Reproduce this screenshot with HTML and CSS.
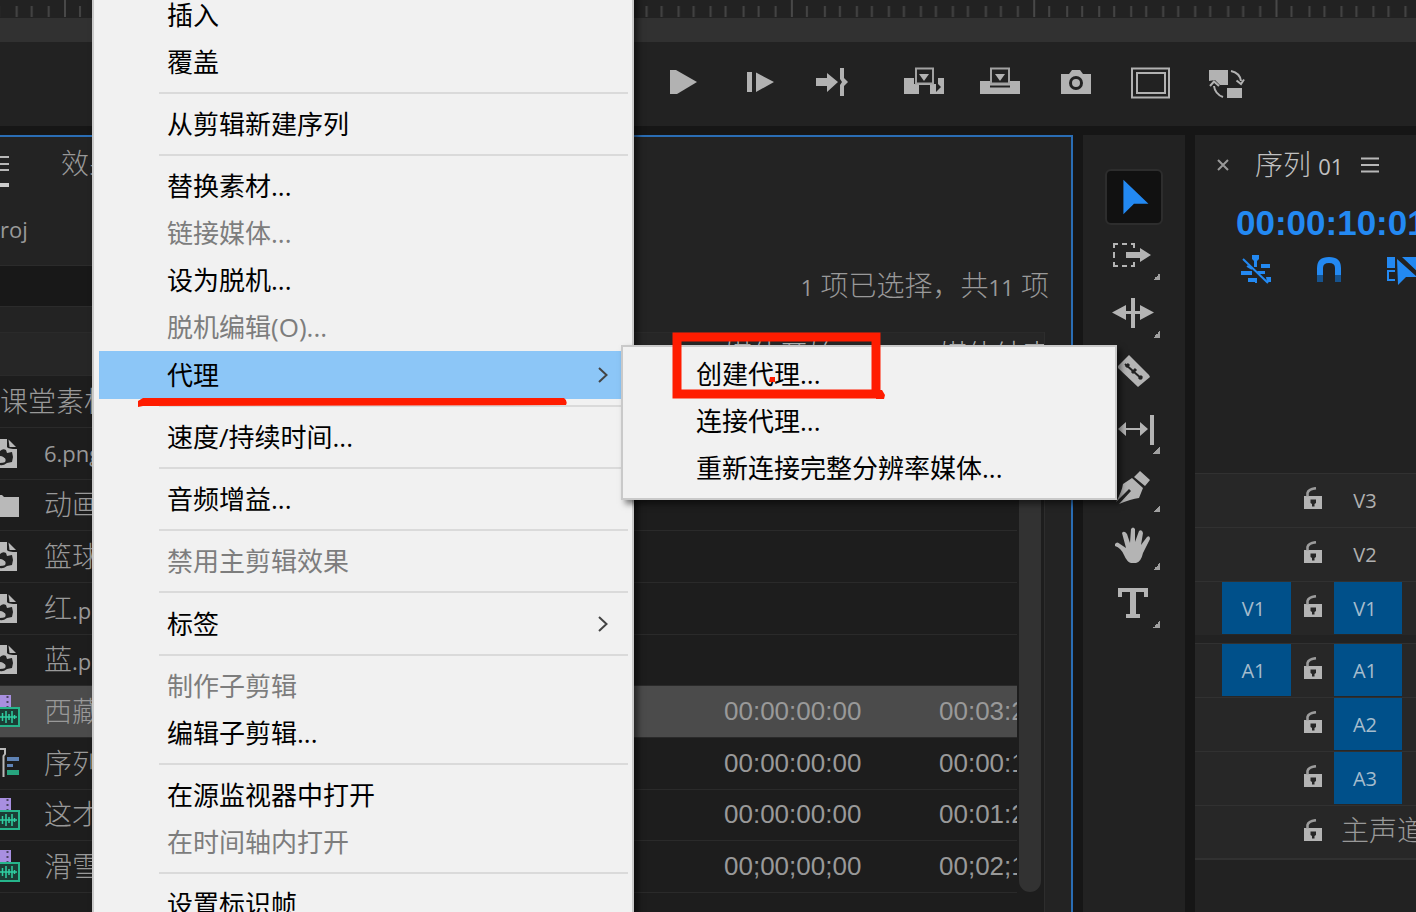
FILE: index.html
```html
<!DOCTYPE html>
<html lang="zh-CN">
<head>
<meta charset="utf-8">
<title>序列 01</title>
<link rel="stylesheet" href="styles.css">
</head>
<body>
<svg class="defs" aria-hidden="true">
  <symbol id="lock" viewBox="0 0 18 22">
    <path d="M0 9H18V22H0Z" fill="#b4b4b4"/>
    <path d="M3.5 9.500V6Q4.500 2 12 1.200" fill="none" stroke="#9c9c9c" stroke-width="2.600"/>
    <path d="M6.500 12.500H12V16L10.500 17V19.500H8V17L6.500 16Z" fill="#262626"/>
  </symbol>
  <symbol id="still" viewBox="0 0 20 30">
    <path d="M0 1H7V9Q8 11 17 11V30H0Z" fill="#b9b9b9"/>
    <path d="M8.500 1.500L16 9H9.500Z" fill="#b9b9b9"/>
    <path d="M0 13Q3 10 6 12L7 15L12 14L13 19L12 24L7 25Q3 28 0 27V25Q4 25 5 22Q4 18 0 18Z" fill="#222"/>
    <circle cx="3" cy="22" r="2.600" fill="#b9b9b9"/>
  </symbol>
  <symbol id="clip" viewBox="0 0 20 34">
    <path d="M0 1H11V14H0Z" fill="#a88fe0"/>
    <path d="M7.500 2V13" stroke="#4a4360" stroke-width="2" stroke-dasharray="2 3"/>
    <path d="M-2 14H19V32H-2Z" fill="#1c3d35" stroke="#26b58b" stroke-width="2"/>
    <path d="M0 23H17M2.500 19V27M6 17V29M9 20V26M12 17V29M14.500 21V25" stroke="#2fd0a2" stroke-width="1.500"/>
  </symbol>
  <symbol id="sequence" viewBox="0 0 20 34">
    <path d="M0 3H5V8L3.500 10V31" fill="none" stroke="#b9b9b9" stroke-width="2"/>
    <path d="M7 11H19V15H7ZM7 18H13V21H7Z" fill="#5f83b5"/>
    <path d="M7 24H19V29H7Z" fill="#27a47e"/>
  </symbol>
  <symbol id="arrow" viewBox="0 0 12 16"><path d="M2 1L9.500 8L2 15" fill="none" stroke="#444" stroke-width="2"/></symbol>
  <symbol id="bars" viewBox="0 0 18 16"><path d="M0 1.500H18M0 8H18M0 14.500H18" stroke="#b8b8b8" stroke-width="2"/></symbol>
</svg>

<header class="monitor">
  <svg class="ruler" aria-hidden="true">
    <defs>
      <pattern id="ticks" x="64" y="0" width="242.300" height="18" patternUnits="userSpaceOnUse">
        <path d="M1 0V17" stroke="#484848" stroke-width="2"/>
        <path d="M16 6V17M34 6V17M49 6V17M66 6V17M81 6V17M98 6V17M113 6V17M130 6V17M145 6V17M162 6V17M177 6V17M195 6V17M210 6V17M227 6V17" stroke="#444" stroke-width="2"/>
      </pattern>
    </defs>
    <rect width="100%" height="18" fill="url(#ticks)"/>
  </svg>
  <div class="zoombar"></div>
  <div class="transport">
    <div class="group">
      <button aria-label="播放"><svg viewBox="0 0 44 36"><path d="M9 6H15L36 18L16 30H9Z" fill="#b2b2b2"/></svg></button>
      <button aria-label="前进一帧"><svg viewBox="0 0 44 36"><path d="M10 8H15V28H10ZM19 8.500L37 18L19 28Z" fill="#b2b2b2"/></svg></button>
      <button aria-label="转到出点"><svg viewBox="0 0 44 36"><path d="M3 14H14V9L25 18L14 28V22H3ZM27 4H31V14L35 18L31 22V32H27V21L29 18L27 15Z" fill="#b2b2b2"/></svg></button>
    </div>
    <div class="group">
      <button aria-label="插入"><svg viewBox="0 0 44 36"><path d="M2 14H12V20H36V14H42V30H28V21H17V30H2Z" fill="#b2b2b2"/><path d="M14 4.500H31V19.500H14Z" fill="#222" stroke="#a2a2a2" stroke-width="2"/><path d="M17 10H27L22 17Z" fill="#b2b2b2"/><path d="M34 18L39 23L34 28Z" fill="#222"/></svg></button>
      <button aria-label="覆盖"><svg viewBox="0 0 44 36"><path d="M2 17H42V30H2Z" fill="#b2b2b2"/><path d="M13 4.500H31V19.500H13Z" fill="#222" stroke="#a2a2a2" stroke-width="2"/><path d="M17 10H27L22 17Z" fill="#b2b2b2"/><path d="M12 22.500H32" stroke="#222" stroke-width="2"/></svg></button>
      <button aria-label="导出帧"><svg viewBox="0 0 44 36"><path d="M7 10H15L18 6H26L29 10H37V30H7Z" fill="#b2b2b2"/><circle cx="22" cy="19" r="5.500" fill="none" stroke="#222" stroke-width="3"/></svg></button>
      <button aria-label="安全边距"><svg viewBox="0 0 44 36"><path d="M2 4.500H39V33.500H2ZM7 9H35V29H7Z" fill="none" stroke="#b2b2b2" stroke-width="2"/></svg></button>
      <button aria-label="切换代理"><svg viewBox="0 0 44 36"><path d="M3 6H22V21H14L9 16L3 17ZM21 24H36V34H21Z" fill="#b2b2b2"/><path d="M25 7Q34 9 35 17M30.500 16.500L35 20L38 15.500M17 33Q9 30 8 22M4 22L8 17.500L13 22" fill="none" stroke="#b2b2b2" stroke-width="2"/></svg></button>
    </div>
  </div>
</header>

<main class="workspace">
  <section class="project">
    <div class="tabs">
      <button class="tab-menu" aria-label="项目菜单"><svg viewBox="0 0 9 32"><path d="M0 2H9M0 9H9M0 15H9" stroke="#b8b8b8" stroke-width="2"/><path d="M0 30H9" stroke="#ccc" stroke-width="4"/></svg></button>
      <button class="tab">效果</button>
    </div>
    <p class="filename">roj</p>
    <div class="filter">
      <input class="search" type="text" aria-label="搜索">
      <span class="count"><small>1</small> 项已选择，共<small>11</small> 项</span>
    </div>
    <div class="bin">
      <table>
        <colgroup><col class="col-icon"><col class="col-name"><col class="col-start"><col></colgroup>
        <thead><tr><th colspan="2"></th><th>媒体开始</th><th>媒体结束</th></tr></thead>
        <tbody>
          <tr><td colspan="2">课堂素材</td><td></td><td></td></tr>
          <tr><td><svg class="kind"><use href="#still"/></svg></td><td>6.png</td><td></td><td></td></tr>
          <tr><td><svg class="kind" viewBox="0 0 20 34"><path d="M0 8H2L4 10H19V30H0Z" fill="#b9b9b9"/></svg></td><td>动画</td><td></td><td></td></tr>
          <tr><td><svg class="kind"><use href="#still"/></svg></td><td>篮球</td><td></td><td></td></tr>
          <tr><td><svg class="kind"><use href="#still"/></svg></td><td>红<small>.png</small></td><td></td><td></td></tr>
          <tr><td><svg class="kind"><use href="#still"/></svg></td><td>蓝<small>.png</small></td><td></td><td></td></tr>
          <tr class="selected"><td><svg class="kind"><use href="#clip"/></svg></td><td>西藏</td><td class="time">00:00:00:00</td><td class="time">00:03:2</td></tr>
          <tr><td><svg class="kind"><use href="#sequence"/></svg></td><td>序列</td><td class="time">00:00:00:00</td><td class="time">00:00:1</td></tr>
          <tr><td><svg class="kind"><use href="#clip"/></svg></td><td>这才</td><td class="time">00:00:00:00</td><td class="time">00:01:2</td></tr>
          <tr><td><svg class="kind"><use href="#clip"/></svg></td><td>滑雪</td><td class="time">00;00;00;00</td><td class="time">00;02;1</td></tr>
        </tbody>
      </table>
      <div class="scroll"><div class="thumb"></div></div>
    </div>
  </section>

  <nav class="tools" aria-label="工具">
    <button class="tool active" aria-label="选择工具"><svg viewBox="0 0 56 56"><path d="M17 10L43 35H28L17 46Z" fill="#2389f2"/></svg></button>
    <button class="tool more" aria-label="向前选择轨道工具"><svg viewBox="0 0 56 56"><path d="M9 21V17H13M17 17H22M26 17H29V21M9 25V31M9 35V39H13M17 39H22M26 39H29V35" fill="none" stroke="#b4b4b4" stroke-width="2"/><path d="M21 25H35V21L46 28L35 35V31H21Z" fill="#b4b4b4"/></svg></button>
    <button class="tool more" aria-label="波纹编辑工具"><svg viewBox="0 0 56 56"><path d="M26 13H30V43H26ZM7 27.500L21 20V26H35V20L49 27.500L35 35V29H21V35Z" fill="#b4b4b4"/></svg></button>
    <button class="tool" aria-label="剃刀工具"><svg viewBox="0 0 56 56"><path d="M24 12L44 32L45 34L33 44L13 25V23Z" fill="#b4b4b4"/><path d="M20 21L37 36" stroke="#222" stroke-width="2"/><path d="M21 24L24 21M27 30L31 26M34 36L37 33" stroke="#222" stroke-width="3"/></svg></button>
    <button class="tool more" aria-label="外滑工具"><svg viewBox="0 0 56 56"><path d="M45 14H49V44H45ZM13 28L21 21V27H35V21L43 28L35 35V29H21V35Z" fill="#b4b4b4"/></svg></button>
    <button class="tool more" aria-label="钢笔工具"><svg viewBox="0 0 56 56"><path d="M35 12L45 21L40 27L29 18ZM27 19L38 29L34 39Q26 40 14 45L26 32L24 30L11 43Q17 32 18 25Z" fill="#b4b4b4"/></svg></button>
    <button class="tool more" aria-label="手形工具"><svg viewBox="0 0 56 56"><path d="M10 27Q12 24 15 27L21 31L17 16Q19 13 22 17L25 26L26 12Q28 9 30 12V25L34 14Q37 12 38 16L36 28L42 20Q45 18 45 22L38 36Q36 45 31 46H26Q22 45 19 38Q16 31 10 29Z" fill="#b4b4b4"/></svg></button>
    <button class="tool more" aria-label="文字工具"><svg viewBox="0 0 56 56"><path d="M13 13H43V22H39V17H31V39H35V43H21V39H25V17H17V22H13Z" fill="#b4b4b4"/></svg></button>
  </nav>

  <section class="timeline">
    <div class="seq-tab">
      <button class="close" aria-label="关闭"><svg viewBox="0 0 12 12"><path d="M1 1L11 11M11 1L1 11" stroke="#999" stroke-width="2"/></svg></button>
      <span class="seq-name">序列 <small>01</small></span>
      <button class="seq-menu" aria-label="序列菜单"><svg><use href="#bars"/></svg></button>
    </div>
    <div class="timecode">00:00:10:01</div>
    <div class="options">
      <button aria-label="嵌套序列"><svg viewBox="0 0 32 32"><path d="M12 2H19V6L17 8V14H14V8L12 6ZM21 11H30V15H21ZM17 18H25V21H19ZM1 18H12V22H1ZM8 25H15V29H8ZM17 25V30H15V25ZM26 24H31V29H27Z" fill="#2389f2"/><path d="M3 6L28 30M7 13L12 16" stroke="#2389f2" stroke-width="2"/></svg></button>
      <button aria-label="对齐"><svg viewBox="0 0 32 32"><path d="M7 22V15Q7 7 16 7Q25 7 25 15V22" fill="none" stroke="#2389f2" stroke-width="6"/><path d="M7 22V29M25 22V29" stroke="#16538f" stroke-width="6"/></svg></button>
      <button aria-label="链接选择项"><svg viewBox="0 0 32 32"><path d="M1 4H9V15H1ZM16 4H32V19Z" fill="#2389f2"/><path d="M9 18H2V27H9" fill="none" stroke="#2389f2" stroke-width="2"/><path d="M11 6L31 24L20 24L12 32Z" fill="#2389f2"/></svg></button>
    </div>
    <div class="tracks">
      <div class="track"><svg class="lock"><use href="#lock"/></svg><button class="target">V3</button></div>
      <div class="track"><svg class="lock"><use href="#lock"/></svg><button class="target">V2</button></div>
      <div class="track"><button class="source">V1</button><svg class="lock"><use href="#lock"/></svg><button class="target on">V1</button></div>
      <div class="track audio"><button class="source">A1</button><svg class="lock"><use href="#lock"/></svg><button class="target on">A1</button></div>
      <div class="track"><svg class="lock"><use href="#lock"/></svg><button class="target on">A2</button></div>
      <div class="track"><svg class="lock"><use href="#lock"/></svg><button class="target on">A3</button></div>
      <div class="track last"><svg class="lock"><use href="#lock"/></svg><span class="master">主声道</span></div>
    </div>
  </section>
</main>

<ul class="menu main-menu">
  <li><button>插入</button></li>
  <li><button>覆盖</button></li>
  <li class="sep"></li>
  <li><button>从剪辑新建序列</button></li>
  <li class="sep"></li>
  <li><button>替换素材...</button></li>
  <li><button disabled>链接媒体...</button></li>
  <li><button>设为脱机...</button></li>
  <li><button disabled>脱机编辑(O)...</button></li>
  <li><button class="parent open">代理<svg><use href="#arrow"/></svg></button></li>
  <li class="sep"></li>
  <li><button>速度/持续时间...</button></li>
  <li class="sep"></li>
  <li><button>音频增益...</button></li>
  <li class="sep"></li>
  <li><button disabled>禁用主剪辑效果</button></li>
  <li class="sep"></li>
  <li><button class="parent">标签<svg><use href="#arrow"/></svg></button></li>
  <li class="sep"></li>
  <li><button disabled>制作子剪辑</button></li>
  <li><button>编辑子剪辑...</button></li>
  <li class="sep"></li>
  <li><button>在源监视器中打开</button></li>
  <li><button disabled>在时间轴内打开</button></li>
  <li class="sep"></li>
  <li><button>设置标识帧</button></li>
</ul>

<ul class="menu sub-menu">
  <li><button>创建代理...</button></li>
  <li><button>连接代理...</button></li>
  <li><button>重新连接完整分辨率媒体...</button></li>
</ul>

<svg class="marks" viewBox="0 0 750 80" aria-hidden="true">
  <path d="M5 66H426Q430 69 428 73L5 74L0 75V69Z" fill="#ff1c00"/>
  <path d="M539 5H738V62H539Z" fill="none" stroke="#ff1c00" stroke-width="9"/>
  <path d="M738 58H744L747 63L746 67H738Z" fill="#ff1c00"/>
  <path d="M632 45H637V50H631Z" fill="#ff1c00"/>
</svg>
</body>
</html>
```
FILE: styles.css
```css
* { box-sizing: border-box; }

body {
  margin: 0;
  height: 100vh;
  overflow: hidden;
  position: relative;
  display: flex;
  flex-direction: column;
  background: #161616;
  color: #999;
  font-family: "Open Sans", "Noto Sans CJK SC", sans-serif;
  font-size: 22px;
}

button {
  margin: 0;
  padding: 0;
  border: 0;
  background: none;
  color: inherit;
  font: inherit;
}

small { font-size: 22px; font-weight: 400; line-height: 1; }
svg { display: block; }
.defs { position: absolute; width: 0; height: 0; }

/* Monitor strip */
.monitor { background: #222; }
.ruler { width: 100%; height: 18px; }
.zoombar { height: 24px; background: #313131; }
.transport {
  display: flex;
  gap: 13px;
  height: 84px;
  padding: 0 0 4px 645px;
}
.group { display: flex; }
.group button {
  width: 76px;
  display: flex;
  align-items: center;
  justify-content: center;
}
.group svg { width: 44px; height: 36px; }

.workspace {
  flex: 1;
  min-height: 0;
  display: flex;
  gap: 10px;
  margin-top: 9px;
}

/* Project panel */
.project {
  flex: 1;
  min-width: 0;
  display: flex;
  flex-direction: column;
  background: #232323;
  border: solid #2a6db4;
  border-width: 2px 2px 0 0;
}
.tabs {
  display: flex;
  gap: 52px;
  height: 58px;
  font-size: 28px;
  font-weight: 300;
}
.tab { height: 52px; line-height: 52px; }
.tab-menu { padding-top: 10px; }
.tab-menu svg { width: 9px; height: 32px; }
.filename { margin: 0; height: 70px; line-height: 68px; }
.filter {
  display: flex;
  justify-content: space-between;
  align-items: flex-start;
  height: 42px;
  padding-right: 22px;
}
.search {
  width: 480px;
  height: 42px;
  background: #181818;
  border: 1px solid #2b2b2b;
  border-left: 0;
}
.count, .seq-name, .master {
  font-size: 28px;
  font-weight: 300;
  line-height: 40px;
  white-space: pre;
}

.bin {
  flex: 1;
  min-height: 0;
  position: relative;
  overflow: hidden;
  margin: 25px 26px 0 0;
  background: #1d1d1d;
  border-right: 1px solid #2d2d2d;
}
table {
  width: 100%;
  table-layout: fixed;
  border-collapse: collapse;
}
.col-icon { width: 44px; }
.col-name { width: 680px; }
.col-start { width: 215px; }
th, td {
  padding: 0;
  border-top: 1px solid #2a2a2a;
  text-align: left;
  white-space: nowrap;
  overflow: hidden;
}
th {
  height: 43px;
  background: #262626;
  color: #b0b0b0;
  font-size: 28px;
  font-weight: 300;
  line-height: 42px;
}
td {
  height: 52px;
  padding-bottom: 2px;
  font-size: 28px;
  font-weight: 300;
  line-height: 46px;
}
tr:nth-child(3n) td { height: 51px; }
tr:nth-child(2) td { font-size: 22px; font-weight: 400; }
tbody tr:last-child td { border-bottom: 1px solid #2a2a2a; }
.selected { background: #4b4b4b; }
td.time {
  font-family: "Liberation Sans", sans-serif;
  font-size: 26px;
  font-weight: 400;
}
.kind { width: 20px; height: 34px; }
.scroll {
  position: absolute;
  top: 43px;
  right: 0;
  bottom: 0;
  width: 27px;
  background: #1d1d1d;
}
.thumb {
  width: 22px;
  height: 517px;
  margin-left: 2px;
  border-radius: 11px;
  background: #323232;
}

/* Tool palette */
.tools {
  width: 102px;
  padding-top: 34px;
  display: flex;
  flex-direction: column;
  align-items: center;
  background: #222;
}
.tool {
  position: relative;
  width: 58px;
  height: 58px;
}
.tool svg { width: 56px; height: 56px; }
.tool.active {
  height: 56px;
  margin-bottom: 1px;
  overflow: hidden;
  display: flex;
  align-items: center;
  justify-content: center;
  background: #111;
  border: 2px solid #2d2d2d;
  border-radius: 6px;
}
.tool.more::after {
  content: "";
  position: absolute;
  right: 3px;
  bottom: 4px;
  width: 7px;
  height: 7px;
  background: linear-gradient(135deg, transparent 50%, #a0a0a0 50%);
}

/* Timeline */
.timeline {
  width: 221px;
  overflow: hidden;
  background: #222;
}
.seq-tab {
  display: flex;
  align-items: center;
  height: 60px;
  padding-left: 22px;
  color: #c0c0c0;
}
.close svg { width: 12px; height: 12px; }
.seq-name { margin: 0 18px 0 26px; padding-bottom: 2px; }
.seq-menu svg { width: 18px; height: 16px; }
.timecode {
  height: 56px;
  padding-left: 41px;
  color: #2389f2;
  font: bold 35px/56px "Liberation Sans", sans-serif;
}
.options {
  display: flex;
  gap: 41px;
  height: 36px;
  padding-left: 45px;
}
.options svg { width: 32px; height: 32px; }
.tracks { margin-top: 186px; }
.track {
  display: grid;
  grid-template-columns: 27px 69px 43px 68px 1fr;
  align-items: start;
  height: 54px;
  background: #272727;
  border-top: 1px solid #313131;
  font-size: 20px;
}
.track.audio { margin-top: 8px; }
.track.last { height: 55px; border-bottom: 2px solid #313131; }
.track > * { grid-row: 1; }
.source { grid-column: 2; }
.lock {
  grid-column: 3;
  width: 18px;
  height: 22px;
  margin-top: 13px;
  justify-self: center;
}
.target { grid-column: 4; height: 52px; padding: 0 6px 0 0; color: #b0b0b0; }
.source, .target.on {
  height: 52px;
  padding: 0 6px 0 0;
  background: #00508a;
  color: #a5bccd;
}
.master { grid-column: 4 / 6; padding: 4px 0 0 7px; }

/* Context menus */
.menu {
  position: absolute;
  margin: 0;
  list-style: none;
  background: #f1f1f1;
  border: 2px solid #c9c9c9;
  box-shadow: 4px 4px 6px rgba(0, 0, 0, .5);
  color: #000;
  font-size: 26px;
}
.menu button {
  display: block;
  width: 100%;
  height: 47px;
  line-height: 47px;
  text-align: left;
  white-space: nowrap;
}
.menu button:disabled { color: #7d7d7d; }
.main-menu {
  top: -10px;
  left: 92px;
  width: 542px;
  padding: 0 10px 4px 5px;
}
.main-menu button { padding-left: 68px; }
.main-menu .parent {
  height: 48px;
  display: flex;
  align-items: center;
  justify-content: space-between;
  padding-right: 13px;
}
.parent svg { width: 12px; height: 16px; }
.open { background: #8cc6f7; }
.sep {
  height: 15px;
  margin: 0 -6px 0 60px;
  padding-top: 6px;
}
.sep::before {
  content: "";
  display: block;
  height: 2px;
  background: #dadada;
}
.sub-menu {
  top: 345px;
  left: 621px;
  width: 496px;
  padding: 4px 0 6px;
}
.sub-menu button { padding-left: 73px; }

/* Red pen annotation */
.marks {
  position: absolute;
  top: 332px;
  left: 138px;
  width: 750px;
  height: 80px;
  pointer-events: none;
}
```
